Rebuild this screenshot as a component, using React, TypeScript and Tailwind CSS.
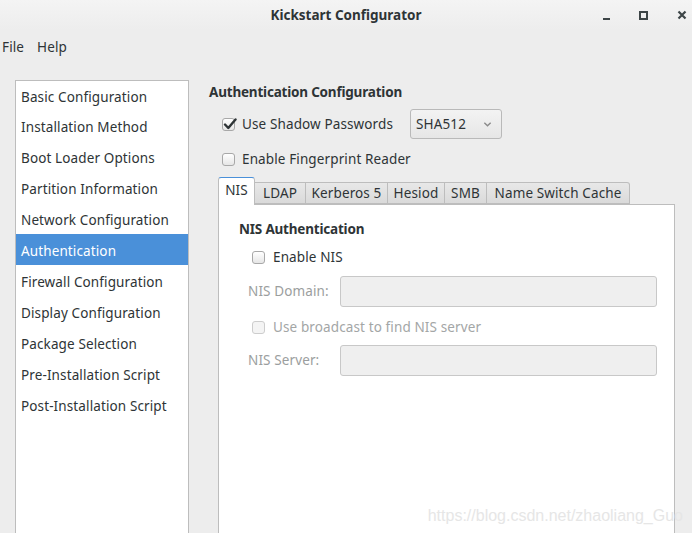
import React from "react";

const items = [
  "Basic Configuration",
  "Installation Method",
  "Boot Loader Options",
  "Partition Information",
  "Network Configuration",
  "Authentication",
  "Firewall Configuration",
  "Display Configuration",
  "Package Selection",
  "Pre-Installation Script",
  "Post-Installation Script",
];

const tabs = [
  { label: "LDAP", w: "w-[51px]" },
  { label: "Kerberos 5", w: "w-[82px]" },
  { label: "Hesiod", w: "w-[57px]" },
  { label: "SMB", w: "w-[42px]" },
  { label: "Name Switch Cache", w: "w-[143px]" },
];

function Check({ checked = false, disabled = false }: { checked?: boolean; disabled?: boolean }) {
  return (
    <span
      className={
        "relative inline-flex w-[13px] h-[13px] rounded-[3px] border shrink-0 " +
        (disabled
          ? "border-[#cdcdcd] bg-[#f4f4f4]"
          : "border-[#a8a8a8] bg-gradient-to-b from-[#ffffff] to-[#e6e6e6]")
      }
    >
      {checked && (
        <svg viewBox="0 0 14 14" className="absolute left-[0px] top-[-2px] w-[14px] h-[14px]">
          <path d="M2 7.5 L5.3 11 L12.5 2.5" fill="none" stroke="#2e3436" strokeWidth="2.4" strokeLinecap="round" strokeLinejoin="round" />
        </svg>
      )}
    </span>
  );
}

export default function App() {
  return (
    <div
      className="w-[692px] h-[533px] bg-[#ededed] overflow-hidden flex flex-col text-[#2e3436] text-[13.5px] tracking-[0.12px]"
      style={{ fontFamily: '"Noto Sans", "Open Sans", sans-serif' }}
    >
      {/* title bar */}
      <div className="h-[30px] shrink-0 grid grid-cols-[1fr_auto_1fr] items-center bg-gradient-to-b from-[#f4f4f4] to-[#ededed]">
        <div />
        <div className="font-bold text-[13.5px] tracking-[0px] text-[#2e3436] pt-[1px]">Kickstart Configurator</div>
        <div className="flex justify-end items-center">
          <div className="w-[20px] h-[24px] flex items-center justify-center">
            <span className="block w-[7px] h-[2px] bg-[#3d4547] mt-[8px]" />
          </div>
          <div className="ml-[17px] w-[20px] h-[24px] flex items-center justify-center">
            <span className="block w-[9px] h-[9px] border-[2px] border-[#3d4547]" />
          </div>
          <div className="ml-[19px] w-[20px] h-[24px] flex items-center justify-center">
            <svg viewBox="0 0 10 10" className="w-[10px] h-[10px]">
              <path d="M1.5 1.5 L8.5 8.5 M8.5 1.5 L1.5 8.5" stroke="#3d4547" strokeWidth="2.2" />
            </svg>
          </div>
        </div>
      </div>

      {/* menu bar */}
      <div className="h-[34px] shrink-0 flex items-center pl-[2px] gap-[13px]">
        <span>File</span>
        <span>Help</span>
      </div>

      {/* body */}
      <div className="flex flex-1 pt-[16px] pl-[15px] min-h-0">
        <div className="w-[174px] shrink-0 bg-white border border-[#bdbdbd] border-b-0 flex flex-col">
          {items.map((it, i) => (
            <div
              key={it}
              className={
                (i === 0 ? "h-[29px] " : "h-[31px] ") +
                "shrink-0 flex items-center pl-[5px] pt-[3px] " +
                (it === "Authentication" ? "bg-[#4a90d9] text-white" : "")
              }
            >
              {it}
            </div>
          ))}
        </div>

        <div className="flex-1 flex flex-col pl-[20px] pr-[17px]">
          <div className="h-[21px] mt-[2px] flex items-center font-bold tracking-[-0.2px]">Authentication Configuration</div>

          <div className="mt-[6px] flex items-center pl-[13px] h-[30px]">
            <Check checked />
            <span className="ml-[7px] pt-[1px]">Use Shadow Passwords</span>
            <div className="ml-[17px] w-[92px] h-[30px] rounded-[3px] border border-[#b9b9b9] bg-gradient-to-b from-[#f3f3f3] to-[#e6e6e6] flex items-center pl-[5px] pr-[9px] justify-between">
              <span className="pt-[1px]">SHA512</span>
              <svg viewBox="0 0 10 10" className="w-[9px] h-[9px]">
                <path d="M1.5 3 L5 6.5 L8.5 3" fill="none" stroke="#8a8a8a" strokeWidth="1.5" />
              </svg>
            </div>
          </div>

          <div className="mt-[10px] flex items-center pl-[13px] h-[20px]">
            <Check />
            <span className="ml-[7px]">Enable Fingerprint Reader</span>
          </div>

          {/* tabs */}
          <div className="mt-[8px] flex items-end pl-[9px] h-[27px] relative z-10">
            <div className="w-[37px] h-[28px] bg-white border border-[#bdbdbd] border-t-[#4a90d9] border-b-0 rounded-t-[3px] flex items-center justify-center -mb-[1px] pb-[2px]">
              NIS
            </div>
            {tabs.map((t) => (
              <div
                key={t.label}
                className={
                  t.w +
                  " h-[22px] border border-[#bdbdbd] border-l-0 bg-gradient-to-b from-[#e8e8e8] to-[#dadada] flex items-center justify-center text-[#2e3436] " +
                  (t.label === "Name Switch Cache" ? "rounded-tr-[3px]" : "")
                }
              >
                {t.label}
              </div>
            ))}
          </div>
          <div className="ml-[9px] flex-1 bg-white border border-[#bdbdbd] border-b-0 pt-[14px] pl-[20px] pr-[17px]">
            <div className="font-bold tracking-[-0.2px] h-[20px] flex items-center">NIS Authentication</div>
            <div className="mt-[8px] flex items-center pl-[13px] h-[20px]">
              <Check />
              <span className="ml-[8px]">Enable NIS</span>
            </div>
            <div className="mt-[9px] flex items-center pl-[9px] h-[31px]">
              <span className="w-[92px] text-[#9b9e9e]">NIS Domain:</span>
              <div className="flex-1 h-[31px] rounded-[3px] border border-[#c8c8c8] bg-[#efefef]" />
            </div>
            <div className="mt-[10px] flex items-center pl-[13px] h-[20px]">
              <Check disabled />
              <span className="ml-[8px] text-[#a3a6a6]">Use broadcast to find NIS server</span>
            </div>
            <div className="mt-[8px] flex items-center pl-[9px] h-[31px]">
              <span className="w-[92px] text-[#9b9e9e]">NIS Server:</span>
              <div className="flex-1 h-[31px] rounded-[3px] border border-[#c8c8c8] bg-[#efefef]" />
            </div>
            <div
              className="mt-[128px] text-right mr-[-26px] text-[16px] tracking-[0px] text-[#e6e6e6]"
              style={{ fontFamily: '"Liberation Sans", Arial, sans-serif' }}
            >
              https://blog.csdn.net/zhaoliang_Guo
            </div>
          </div>
        </div>
      </div>
    </div>
  );
}
